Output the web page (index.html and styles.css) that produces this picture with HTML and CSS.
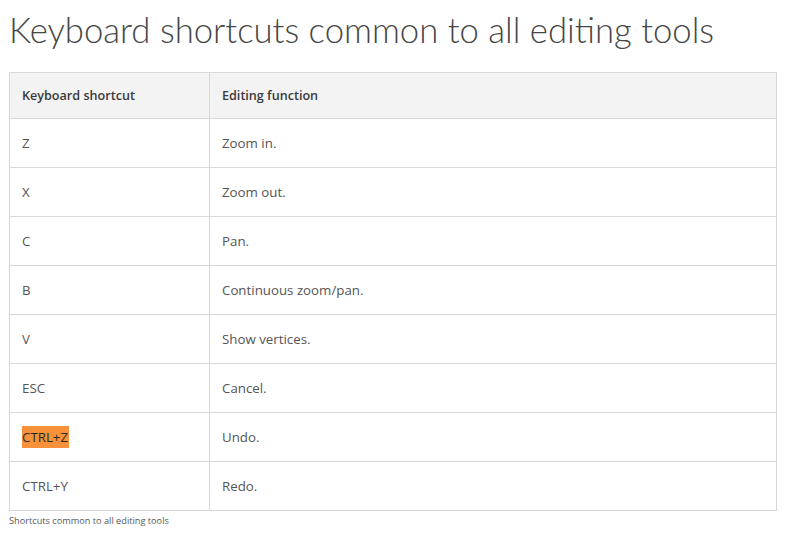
FILE: index.html
```html
<!DOCTYPE html>
<html lang="en">
<head>
<meta charset="utf-8">
<title>Keyboard shortcuts</title>
<link rel="stylesheet" href="styles.css">
</head>
<body>
<h1 class="title">Keyboard shortcuts common to all editing tools</h1>
<table class="shortcuts">
  <thead>
    <tr><th class="col-key">Keyboard shortcut</th><th>Editing function</th></tr>
  </thead>
  <tbody>
    <tr><td>Z</td><td>Zoom in.</td></tr>
    <tr><td>X</td><td>Zoom out.</td></tr>
    <tr><td>C</td><td>Pan.</td></tr>
    <tr><td>B</td><td>Continuous zoom/pan.</td></tr>
    <tr><td>V</td><td>Show vertices.</td></tr>
    <tr><td>ESC</td><td>Cancel.</td></tr>
    <tr><td><span class="hl">CTRL+Z</span></td><td>Undo.</td></tr>
    <tr><td>CTRL+Y</td><td>Redo.</td></tr>
  </tbody>
</table>
<p class="caption">Shortcuts common to all editing tools</p>
</body>
</html>
```
FILE: styles.css
```css
html, body {
  margin: 0;
  padding: 0;
  background: #ffffff;
}
body {
  padding: 0 0 0 9px;
  font-family: "Open Sans", "Noto Sans", sans-serif;
  color: #4c4c4c;
}
.title {
  margin: 0;
  padding-top: 8px;
  height: 72px;
  box-sizing: border-box;
  font-family: Lato, "Open Sans", sans-serif;
  font-weight: 300;
  font-size: 34.7px;
  line-height: 44px;
  color: #474747;
}
.shortcuts {
  border-collapse: collapse;
  width: 768px;
  font-size: 13.3px;
}
.shortcuts th, .shortcuts td {
  border: 1px solid #d8d8d8;
  text-align: left;
  padding: 0 12px;
}
.shortcuts th {
  background: #f3f3f3;
  height: 45px;
  font-weight: 600;
  font-size: 12.6px;
  color: #3a3a3a;
}
.shortcuts td {
  height: 48px;
  color: #555555;
}
.col-key {
  width: 175px;
}
.hl {
  background: #f7923a;
  color: #2a2a2a;
  padding: 2px 1px 2px 0;
}
.caption {
  margin: 3px 0 0;
  font-size: 9.2px;
  color: #595959;
}
```
